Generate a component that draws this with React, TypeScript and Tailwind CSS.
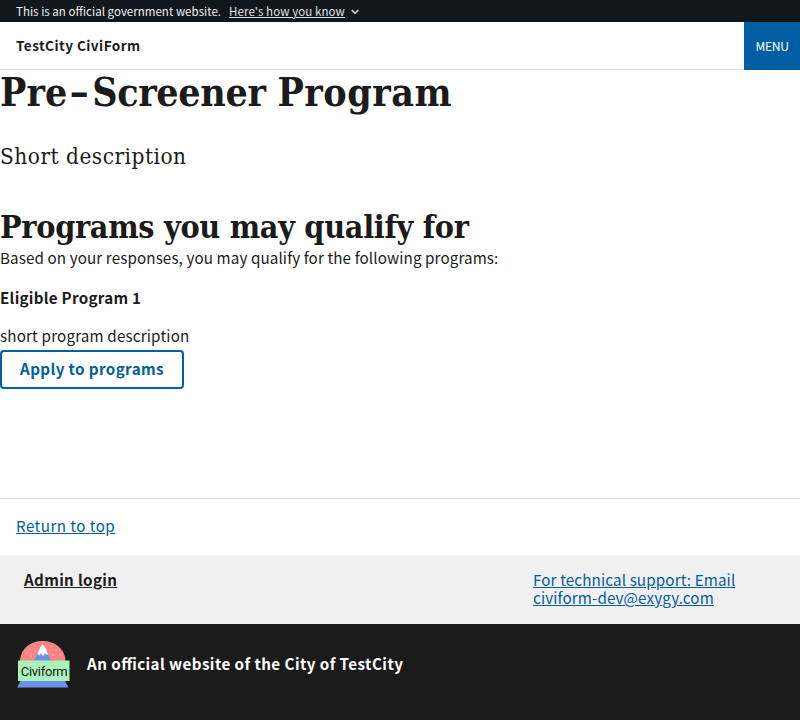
import React from "react";

const sans = "font-['Noto_Sans_CJK_JP','Noto_Sans_CJK_SC',sans-serif] [font-feature-settings:'liga'_1]";
const serif = "font-['DejaVu_Serif_Condensed','DejaVu_Serif',serif] [font-stretch:condensed]";

function Logo() {
  return (
    <svg width="55" height="50" viewBox="0 0 55 50" className="block" aria-label="Civiform logo">
      <path d="M4 22C4 9 14 1 26.500 1S49.500 9 49.500 22Z" fill="#fa8484" />
      <path d="M17.500 21C21 17 23 8 26.500 4.500C30 8 32 17 36 21Z" fill="#6d92ed" />
      <path d="M26.500 4.300C24.500 6.500 23 10 21.500 14L23.500 15.300 25 13.200 27 16.300 29 13.200 30.500 14.800 32 14C30.500 10 29 6.500 26.500 4.300Z" fill="#fff" />
      <g fill="#ffd0cc">
        <circle cx="14" cy="9" r=".7" /><circle cx="19" cy="6" r=".7" /><circle cx="11" cy="13" r=".7" /><circle cx="15" cy="16" r=".7" />
        <circle cx="35" cy="7" r=".7" /><circle cx="40" cy="10" r=".7" /><circle cx="37" cy="15" r=".7" /><circle cx="44" cy="15" r=".7" /><circle cx="19" cy="11" r=".7" />
      </g>
      <path d="M5 40H48.500L52.500 47.500H1.200Z" fill="#6d92ed" />
      <rect x="2" y="20.500" width="51.500" height="20.500" fill="#aaf2b8" />
      <text x="4.700" y="35.800" fontSize="13" textLength="47" fontFamily="Roboto, sans-serif" fill="#1b1b1b">Civiform</text>
    </svg>
  );
}

export default function App() {
  return (
    <div className={`flex h-[720px] w-[800px] flex-col overflow-hidden bg-white text-[#1b1b1b] ${sans}`}>
      <div className="flex h-[22px] shrink-0 items-center bg-[#11181d] pl-4 text-[11.5px] leading-[22px] text-[#f0f0f0]">
        <span className="w-[213px] whitespace-nowrap tracking-[0.03px]">This is an official government website.</span>
        <a className="whitespace-nowrap tracking-[0.1px] text-[#dfe1e2] underline">Here's how you know</a>
        <svg width="8" height="6" viewBox="0 0 8 6" className="ml-1.5 mt-0.5" fill="none" stroke="#dfe1e2" strokeWidth="1.500"><path d="M.7 1 4 4.300 7.300 1" /></svg>
      </div>
      <header className="flex h-12 shrink-0 justify-between border-b border-[#dfe1e2] pl-4">
        <span className="whitespace-nowrap text-[13.6px] font-bold leading-[47px] tracking-[0.43px]">TestCity CiviForm</span>
        <button className="-mb-px h-12 w-14 bg-[#005ea2] text-[12.1px] leading-[48px] tracking-[-0.3px] text-white">MENU</button>
      </header>
      <main className="flex h-[428px] shrink-0 flex-col items-start whitespace-nowrap text-[15.2px]">
        <h1 className={`h-[73px] text-[39px] font-bold leading-[44px] ${serif}`}>
          Pre<span className="inline-block w-[25px] text-center"><span className="inline-block scale-x-140 scale-y-85">-</span></span><span className="tracking-[-0.35px]">Screener </span><span className="tracking-[0.5px]">Program</span>
        </h1>
        <p className={`h-[65px] text-[22.4px] leading-[27px] tracking-[0.5px] ${serif}`}>Short description</p>
        <h2 className={`h-[39px] text-[32px] font-bold leading-[38px] tracking-[-0.3px] ${serif}`}>Programs you may qualify for</h2>
        <p className="h-[40px] leading-[20px] tracking-[0.11px]">Based on your responses, you may qualify for the following programs:</p>
        <h3 className="h-[38px] font-bold leading-[20px] tracking-[0.26px]">Eligible Program 1</h3>
        <p className="h-[25px] leading-[20px] tracking-[0.17px]">short program description</p>
        <button className="h-[39px] w-[184px] rounded border-2 border-[#005ea2] pb-0.5 font-bold leading-[33px] tracking-[0.38px] text-[#005ea2]">Apply to programs</button>
      </main>
      <footer className="flex grow flex-col text-[15.2px]">
        <div className="h-[57px] border-t border-[#dfe1e2] pl-4 leading-[52px] tracking-[0.44px]">
          <a className="text-[#005ea2] underline">Return to top</a>
        </div>
        <div className="flex h-[69px] justify-between bg-[#f0f0f0] pl-6 pt-[15px] leading-[18px]">
          <a className="font-bold tracking-[0.33px] underline">Admin login</a>
          <a className="w-[267px] tracking-[0.13px] text-[#005ea2] underline">For technical support: Email<br />civiform-dev@exygy.com</a>
        </div>
        <div className="flex grow gap-4 bg-[#1b1b1b] pl-4 pt-4 text-white">
          <Logo />
          <span className="font-bold leading-[46px] tracking-[0.43px]">An official website of the City of TestCity</span>
        </div>
      </footer>
    </div>
  );
}
